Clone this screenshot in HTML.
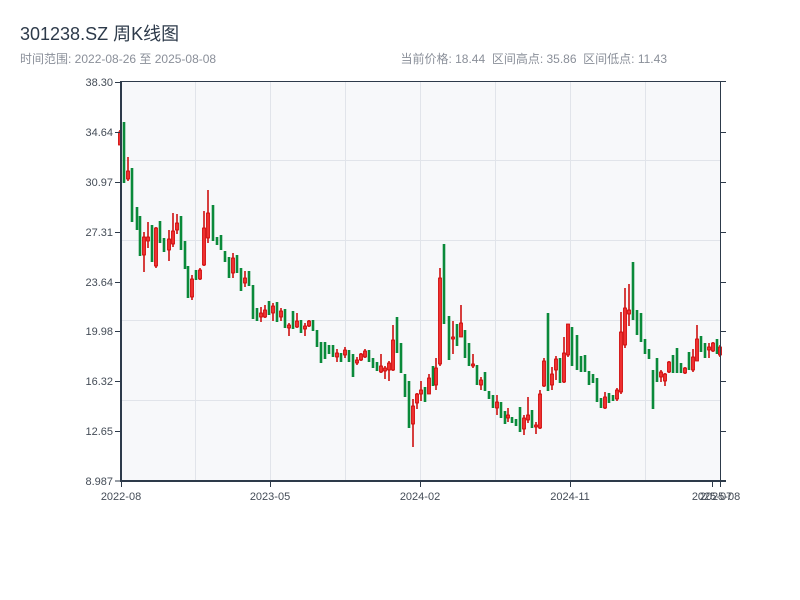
<!DOCTYPE html>
<html><head><meta charset="utf-8"><style>
body{margin:0;background:#fff;width:800px;height:600px;overflow:hidden;font-family:"Liberation Sans","Noto Sans CJK SC",sans-serif;}
svg{position:absolute;left:0;top:0}
</style></head><body>
<svg id="s" width="800" height="600" xmlns="http://www.w3.org/2000/svg" font-family="Liberation Sans, Noto Sans CJK SC, sans-serif">
<text x="20" y="40" font-size="18" fill="#2d3a4a">301238.SZ 周K线图</text>
<text x="20" y="63" font-size="12" fill="#8a8f99">时间范围: 2022-08-26 至 2025-08-08</text>
<text x="667" y="63" font-size="12" fill="#8a8f99" text-anchor="end">当前价格: 18.44&#160;&#160;区间高点: 35.86&#160;&#160;区间低点: 11.43</text>
<rect x="121" y="82" width="599" height="399" fill="#f7f8fa"/>
<g stroke="#e1e4ea" stroke-width="1">
<line x1="121" x2="720" y1="160.5" y2="160.5"/><line x1="121" x2="720" y1="240.5" y2="240.5"/><line x1="121" x2="720" y1="320.5" y2="320.5"/><line x1="121" x2="720" y1="400.5" y2="400.5"/>
<line x1="195.5" x2="195.5" y1="82" y2="481"/><line x1="270.5" x2="270.5" y1="82" y2="481"/><line x1="345.5" x2="345.5" y1="82" y2="481"/><line x1="420.5" x2="420.5" y1="82" y2="481"/><line x1="495.5" x2="495.5" y1="82" y2="481"/><line x1="570.5" x2="570.5" y1="82" y2="481"/><line x1="645.5" x2="645.5" y1="82" y2="481"/>
</g>
<g id="c"></g>
<g stroke="#2d3a4a" fill="none">
<line x1="121" x2="726" y1="81.5" y2="81.5" stroke-width="1"/>
<line x1="720.5" x2="720.5" y1="81" y2="482" stroke-width="1"/>
<line x1="121" x2="121" y1="81" y2="482" stroke-width="2"/>
<line x1="120" x2="726" y1="481" y2="481" stroke-width="2"/>
<g stroke-width="1">
<line x1="115" x2="121" y1="82.5" y2="82.5"/><line x1="115" x2="121" y1="132.5" y2="132.5"/><line x1="115" x2="121" y1="182.5" y2="182.5"/><line x1="115" x2="121" y1="232.5" y2="232.5"/><line x1="115" x2="121" y1="282.5" y2="282.5"/><line x1="115" x2="121" y1="331.5" y2="331.5"/><line x1="115" x2="121" y1="381.5" y2="381.5"/><line x1="115" x2="121" y1="431.5" y2="431.5"/><line x1="115" x2="121" y1="481" y2="481"/>
<line x1="720" x2="726" y1="132.5" y2="132.5"/><line x1="720" x2="726" y1="182.5" y2="182.5"/><line x1="720" x2="726" y1="232.5" y2="232.5"/><line x1="720" x2="726" y1="282.5" y2="282.5"/><line x1="720" x2="726" y1="331.5" y2="331.5"/><line x1="720" x2="726" y1="381.5" y2="381.5"/><line x1="720" x2="726" y1="431.5" y2="431.5"/><line x1="720" x2="726" y1="481" y2="481"/>
<line x1="121.5" x2="121.5" y1="481" y2="487"/><line x1="270.5" x2="270.5" y1="481" y2="487"/><line x1="420.5" x2="420.5" y1="481" y2="487"/><line x1="570.5" x2="570.5" y1="481" y2="487"/><line x1="712.5" x2="712.5" y1="481" y2="487"/><line x1="720.5" x2="720.5" y1="481" y2="487"/>
</g></g>
<g font-size="11" fill="#444c57" text-anchor="end">
<text x="113" y="86">38.30</text><text x="113" y="136">34.64</text><text x="113" y="186">30.97</text><text x="113" y="236">27.31</text><text x="113" y="286">23.64</text><text x="113" y="335">19.98</text><text x="113" y="385">16.32</text><text x="113" y="435">12.65</text><text x="113" y="485">8.987</text>
</g>
<g font-size="11" fill="#444c57" text-anchor="middle">
<text x="121" y="500">2022-08</text><text x="270" y="500">2023-05</text><text x="420" y="500">2024-02</text><text x="570" y="500">2024-11</text><text x="712" y="500">2025-07</text><text x="720" y="500">2025-08</text>
</g>
</svg>
<script>
var d=[[120,'r',130,145,132,145],[124,'g',122,183],[128,'r',157,181,171,179],[132,'g',168,222],[137,'g',207,230],[140,'g',216,256],[144,'r',232,272,237,255],[148,'r',222,248,237,241],[152,'g',225,262],[156,'r',227,268,228,266],[160,'g',221,243],[164,'g',238,252],[169,'r',230,261,239,250],[173,'r',213,247,231,244],[177,'r',214,234,223,230],[181,'g',216,250],[185,'g',241,269],[188,'g',266,298],[192,'r',275,300,279,297],[196,'g',270,280],[200,'r',268,280,270,279],[204,'r',211,266,228,265],[208,'r',190,243,213,238],[213,'g',205,241],[217,'g',237,245],[221,'g',235,250],[225,'g',251,262],[229,'g',257,278],[233,'r',253,278,258,273],[237,'g',255,273],[241,'g',268,291],[245,'r',271,287,278,283],[249,'g',271,286],[253,'g',285,319],[257,'g',308,321],[261,'r',307,322,313,317],[265,'r',305,318,310,317],[269,'g',301,315],[273,'r',303,321,306,313],[277,'g',302,322],[281,'r',308,321,311,317],[285,'g',309,328],[289,'r',323,336,325,328],[293,'g',311,329],[297,'r',313,328,321,327],[301,'g',320,333],[305,'r',323,336,326,329],[309,'r',320,327,321,326],[313,'g',320,331],[317,'g',330,347],[321,'g',342,363],[325,'g',342,359],[329,'g',345,354],[333,'g',345,357],[337,'r',349,362,353,357],[341,'g',353,362],[345,'r',347,358,350,355],[349,'g',350,362],[353,'g',354,377],[357,'r',357,365,360,363],[361,'r',353,361,354,360],[365,'r',349,358,351,357],[369,'g',350,362],[373,'g',358,368],[377,'g',362,371],[381,'r',354,373,366,372],[385,'r',366,379,368,371],[389,'r',361,381,363,370],[393,'r',325,371,340,370],[397,'g',317,353],[401,'g',343,373],[405,'g',374,397],[409,'g',381,428],[413,'r',399,447,406,424],[417,'r',393,409,394,403],[421,'r',381,401,390,394],[425,'g',387,402],[429,'r',374,394,378,394],[433,'g',366,386],[436,'r',358,390,368,385],[440,'r',268,366,278,364],[444,'g',244,324],[449,'g',316,360],[453,'r',321,354,337,339],[457,'g',324,346],[461,'r',305,337,323,337],[465,'g',330,358],[469,'g',343,366],[473,'r',354,368,364,366],[477,'g',365,385],[481,'r',377,390,380,385],[485,'g',372,391],[489,'g',391,399],[493,'g',395,408],[497,'r',395,415,402,408],[501,'g',402,418],[505,'g',411,424],[508,'r',408,422,415,418],[512,'g',417,423],[516,'g',419,426],[520,'g',407,432],[524,'r',415,435,418,429],[528,'r',397,423,415,420],[532,'g',410,428],[536,'r',422,434,425,427],[540,'r',390,429,394,428],[544,'r',358,387,361,386],[548,'g',313,391],[552,'r',367,390,374,385],[556,'r',356,380,359,370],[560,'g',358,383],[564,'r',337,383,353,382],[568,'r',324,357,324,355],[572,'g',327,366],[577,'g',335,370],[581,'g',356,372],[585,'g',355,372],[589,'g',371,385],[593,'g',374,383],[597,'g',378,402],[601,'g',398,408],[605,'r',392,409,397,408],[609,'g',393,403],[613,'g',395,401],[617,'r',388,401,390,399],[621,'r',312,394,332,392],[625,'r',288,348,308,345],[629,'r',284,326,310,314],[633,'g',262,320],[637,'g',310,335],[641,'g',313,342],[645,'g',339,354],[649,'g',349,359],[653,'g',370,409],[657,'g',358,382],[661,'r',370,382,372,377],[665,'r',373,386,374,381],[669,'r',361,373,362,372],[673,'g',355,373],[677,'g',348,373],[681,'g',363,373],[685,'r',367,374,368,373],[689,'g',352,370],[693,'r',349,372,357,370],[697,'r',325,361,339,361],[701,'g',336,352],[705,'g',343,358],[709,'r',343,358,347,350],[713,'r',342,352,343,351],[717,'g',339,354],[720,'r',345,357,347,355]];
var h='';d.forEach(function(c){var x=c[0];if(c[1]=='g'){h+='<rect x="'+(x-1.3)+'" y="'+c[2]+'" width="2.6" height="'+(c[3]-c[2])+'" fill="#0a8a3a"/>';}else{h+='<rect x="'+(x-0.75)+'" y="'+c[2]+'" width="1.5" height="'+(c[3]-c[2])+'" fill="#cc0000"/><rect x="'+(x-1.5)+'" y="'+c[4]+'" width="3" height="'+Math.max(1.5,c[5]-c[4])+'" fill="#ee3030" stroke="#cc0000" stroke-width="0.8"/>';}});
document.getElementById('c').innerHTML=h;
</script>
</body></html>
